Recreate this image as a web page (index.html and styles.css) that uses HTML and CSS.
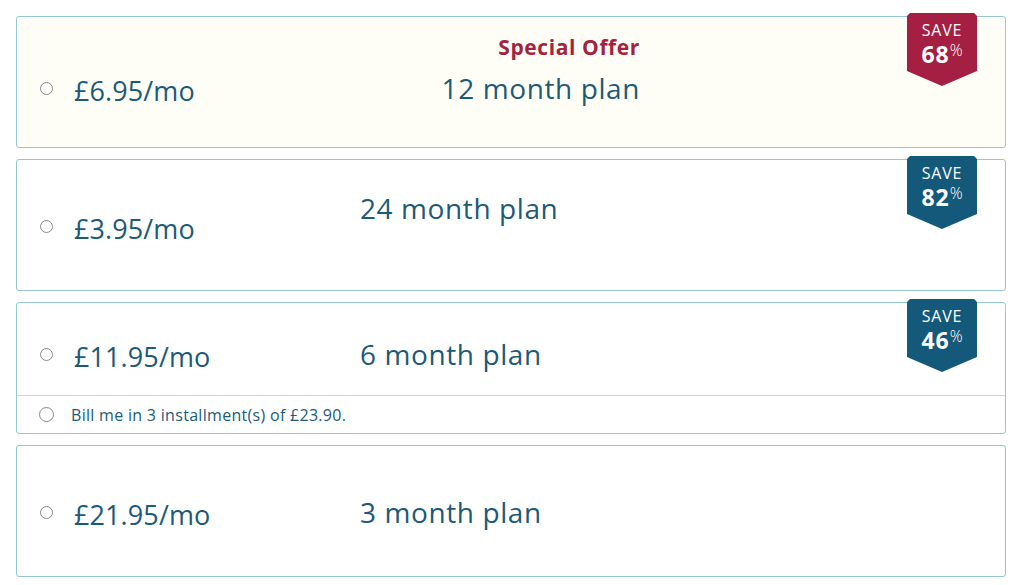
FILE: index.html
```html
<!DOCTYPE html>
<html lang="en">
<head>
<meta charset="utf-8">
<title>Plans</title>
<link rel="stylesheet" href="styles.css">
</head>
<body>
<div class="plans">
  <div class="plan plan--offer">
    <div class="plan-main">
      <span class="radio"></span>
      <span class="price">£6.95/mo</span>
      <div class="plan-name">
        <div class="offer">Special Offer</div>
        <div class="name">12 month plan</div>
      </div>
    </div>
    <div class="badge badge--red"><span class="save">SAVE</span><span class="pct">68<sup>%</sup></span></div>
  </div>

  <div class="plan plan--two">
    <div class="plan-main">
      <span class="radio"></span>
      <span class="price">£3.95/mo</span>
      <div class="plan-name"><div class="name">24 month plan</div></div>
    </div>
    <div class="badge"><span class="save">SAVE</span><span class="pct">82<sup>%</sup></span></div>
  </div>

  <div class="plan plan--three">
    <div class="plan-main">
      <span class="radio"></span>
      <span class="price">£11.95/mo</span>
      <div class="plan-name"><div class="name">6 month plan</div></div>
    </div>
    <div class="install">
      <span class="radio radio--lg"></span>
      <span class="install-text">Bill me in 3 installment(s) of £23.90.</span>
    </div>
    <div class="badge"><span class="save">SAVE</span><span class="pct">46<sup>%</sup></span></div>
  </div>

  <div class="plan plan--four">
    <div class="plan-main">
      <span class="radio"></span>
      <span class="price">£21.95/mo</span>
      <div class="plan-name"><div class="name">3 month plan</div></div>
    </div>
  </div>
</div>
</body>
</html>
```

FILE: styles.css
```css
* { box-sizing: border-box; }
html, body { margin: 0; padding: 0; background: #fff; }
body {
  font-family: "Open Sans", "Lato", sans-serif;
  color: #1c5a78;
}
.plans {
  padding: 16px 18px 0 16px;
  display: flex;
  flex-direction: column;
  gap: 11px;
}
.plan {
  position: relative;
  border: 1px solid #97c7d4;
  border-radius: 3px;
  background: #fff;
}
.plan--offer { background: #fffef6; }
.plan-main {
  height: 130px;
  display: flex;
  align-items: center;
  padding-left: 23px;
}
.plan--offer .plan-main { padding-top: 12px; }
.plan--two .plan-main { padding-top: 2px; }
.plan--three .plan-main { height: 92px; padding-top: 10px; }
.plan--four .plan-main { padding-top: 2px; }
.radio {
  width: 13px;
  height: 13px;
  border: 1px solid #8a8a8a;
  border-radius: 50%;
  background: #fff;
  flex: none;
}
.radio--lg { width: 15px; height: 15px; }
.price {
  margin-left: 21px;
  margin-top: 5px;
  font-size: 27px;
  line-height: 38px;
  width: 286px;
  flex: none;
  letter-spacing: 0.1px;
}
.plan-name {
  width: 280px;
  font-size: 28px;
  line-height: 38px;
  letter-spacing: 0.6px;
}
.plan--offer .plan-name { text-align: right; margin-bottom: 36px; }
.offer {
  color: #a3233f;
  font-weight: 700;
  font-size: 21px;
  line-height: 28px;
  letter-spacing: 0.6px;
  margin-bottom: 8px;
}
.plan--two .plan-name { margin-bottom: 36px; }
.install {
  border-top: 1px solid #d3d3d3;
  height: 38px;
  display: flex;
  align-items: center;
  padding-left: 22px;
}
.install-text {
  margin-left: 17px;
  font-size: 16px;
  letter-spacing: 0.3px;
}
.badge {
  position: absolute;
  top: -4px;
  right: 28px;
  width: 70px;
  height: 73px;
  background: #14587a;
  color: #fff;
  clip-path: polygon(0 3px, 3px 0, calc(100% - 3px) 0, 100% 3px, 100% 58px, 50% 100%, 0 58px);
  display: flex;
  flex-direction: column;
  align-items: center;
  padding-top: 8px;
}
.badge--red { background: #a51f42; }
.save { font-size: 16px; line-height: 18px; letter-spacing: 0.8px; }
.pct { font-size: 23px; font-weight: 700; line-height: 26px; margin-top: 2px; letter-spacing: 1px; }
.pct sup { font-size: 16px; font-weight: 300; vertical-align: 7px; line-height: 0; letter-spacing: 0; }
```
